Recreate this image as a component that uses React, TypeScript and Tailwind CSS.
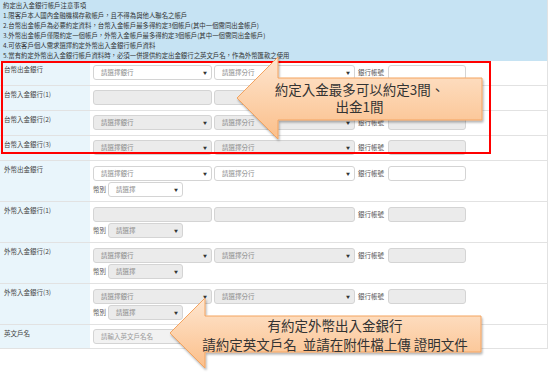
const notes = [
  '約定出入金銀行帳戶注意事項',
  '1.限客戶本人國內金融機構存款帳戶，且不得為與他人聯名之帳戶',
  '2.台幣出金帳戶為必要約定資料，台幣入金帳戶最多得約定3個帳戶(其中一個需同出金帳戶)',
  '3.外幣出金帳戶僅限約定一個帳戶，外幣入金帳戶最多得約定3個帳戶(其中一個需同出金帳戶)',
  '4.可依客戶個人需求選擇約定外幣出入金銀行帳戶資料',
  '5.當有約定外幣出入金銀行帳戶資料時，必須一併提供約定出金銀行之英文戶名，作為外幣匯款之使用',
];

type Mode = 'open' | 'blank' | 'locked';

interface RowDef {
  label: string;
  mode: Mode;
  currency?: boolean;
}

const rows: RowDef[] = [
  { label: '台幣出金銀行', mode: 'open' },
  { label: '台幣入金銀行(1)', mode: 'blank' },
  { label: '台幣入金銀行(2)', mode: 'locked' },
  { label: '台幣入金銀行(3)', mode: 'locked' },
  { label: '外幣出金銀行', mode: 'open', currency: true },
  { label: '外幣入金銀行(1)', mode: 'blank', currency: true },
  { label: '外幣入金銀行(2)', mode: 'locked', currency: true },
  { label: '外幣入金銀行(3)', mode: 'locked', currency: true },
];

function Field({
  width,
  text,
  mode,
  arrow = true,
}: {
  width: string;
  text?: string;
  mode: Mode;
  arrow?: boolean;
}) {
  const off = mode !== 'open';
  return (
    <div
      className={`${width} flex h-[15px] shrink-0 items-center justify-between rounded-[3px] border border-[#d4d4d4] pl-[7px] pr-[4px] text-[6.5px] leading-none text-[#888] ${
        off ? 'bg-[#ebebeb]' : 'bg-white'
      }`}
    >
      <span>{mode === 'blank' ? '' : text}</span>
      {arrow && mode !== 'blank' && (
        <span className="text-[4px] text-[#333]">▼</span>
      )}
    </div>
  );
}

function BankRow({ row }: { row: RowDef }) {
  return (
    <div className="flex border-b border-[#e2e2e2]">
      <div className="w-[90px] shrink-0 bg-[#e9f5fb] pl-[4px] pt-[4px] text-[6.5px] leading-[9px] text-[#444]">
        {row.label}
      </div>
      <div
        className={`flex flex-1 flex-col gap-[1px] pl-[3px] ${
          row.currency ? 'pb-[4px] pt-[5px]' : 'pb-[5px] pt-[4px]'
        }`}
      >
        <div className="flex items-center">
          <Field width="w-[119px]" text="請選擇銀行" mode={row.mode} />
          <div className="w-[2px]" />
          <Field width="w-[141px]" text="請選擇分行" mode={row.mode} />
          <span className="ml-[3px] mr-[4px] text-[6.5px] text-[#555]">
            銀行帳號
          </span>
          <Field width="w-[78px]" mode={row.mode} arrow={false} />
        </div>
        {row.currency && (
          <div className="flex items-center">
            <span className="w-[15px] text-[6.5px] text-[#555]">幣別</span>
            <Field
              width="w-[75px]"
              text="請選擇"
              mode={row.mode === 'blank' ? 'locked' : row.mode}
            />
          </div>
        )}
      </div>
    </div>
  );
}

function Callouts() {
  return (
    <svg
      className="pointer-events-none absolute left-0 top-0"
      width="554"
      height="373"
      viewBox="0 0 554 373"
    >
      <defs>
        <linearGradient id="og" x1="0" y1="0" x2="0" y2="1">
          <stop offset="0" stopColor="#fee6d0" />
          <stop offset="1" stopColor="#fbbf8a" />
        </linearGradient>
        <filter id="sh" x="-10%" y="-10%" width="120%" height="130%">
          <feDropShadow dx="1" dy="2" stdDeviation="1.2" floodColor="#000" floodOpacity="0.3" />
        </filter>
      </defs>
      <polygon
        points="237,98 278,57 278,78 482,78 482,120 278,120 278,139"
        fill="url(#og)"
        stroke="#f4a460"
        strokeWidth="1"
        filter="url(#sh)"
      />
      <polygon
        points="170,333 205,298 205,316 481,316 481,352 205,352 205,368"
        fill="url(#og)"
        stroke="#f4a460"
        strokeWidth="1"
        filter="url(#sh)"
      />
    </svg>
  );
}

export default function App() {
  return (
    <div
      className="relative h-[373px] w-[554px] overflow-hidden bg-white"
      style={{ fontFamily: '"Noto Sans CJK TC", "Noto Sans", sans-serif' }}
    >
      <div className="w-[548px] border-r border-[#e2e2e2]">
        <div className="h-[61px] bg-[#c6e3f3] pl-[3px] pt-[1px] text-[6.4px] leading-[10px] text-[#333]">
          {notes.map((n) => (
            <div key={n} className="whitespace-nowrap">
              {n}
            </div>
          ))}
        </div>
        {rows.map((r) => (
          <BankRow key={r.label} row={r} />
        ))}
        <div className="flex border-b border-[#e2e2e2]">
          <div className="w-[90px] shrink-0 bg-[#e9f5fb] pl-[4px] pt-[4px] text-[6.5px] leading-[9px] text-[#444]">
            英文戶名
          </div>
          <div className="flex-1 pb-[4px] pl-[3px] pt-[4px]">
            <div className="flex h-[15px] w-[160px] items-center rounded-[3px] border border-[#d4d4d4] bg-[#f2f2f2] pl-[7px] text-[6.5px] text-[#999]">
              請輸入英文戶名名
            </div>
          </div>
        </div>
      </div>

      <div className="pointer-events-none absolute left-[1px] top-[61px] h-[93px] w-[490px] border-2 border-[#ff0000]" />

      <Callouts />

      <div className="absolute left-[237px] top-[81px] w-[245px] text-center text-[13.5px] leading-[17px] text-[#333]">
        <div>約定入金最多可以約定3間、</div>
        <div>出金1間</div>
      </div>
      <div className="absolute left-[170px] top-[316px] w-[330px] whitespace-pre text-center text-[13.5px] leading-[19px] text-[#333]">
        <div>有約定外幣出入金銀行</div>
        <div>請約定英文戶名  並請在附件檔上傳 證明文件</div>
      </div>
    </div>
  );
}
